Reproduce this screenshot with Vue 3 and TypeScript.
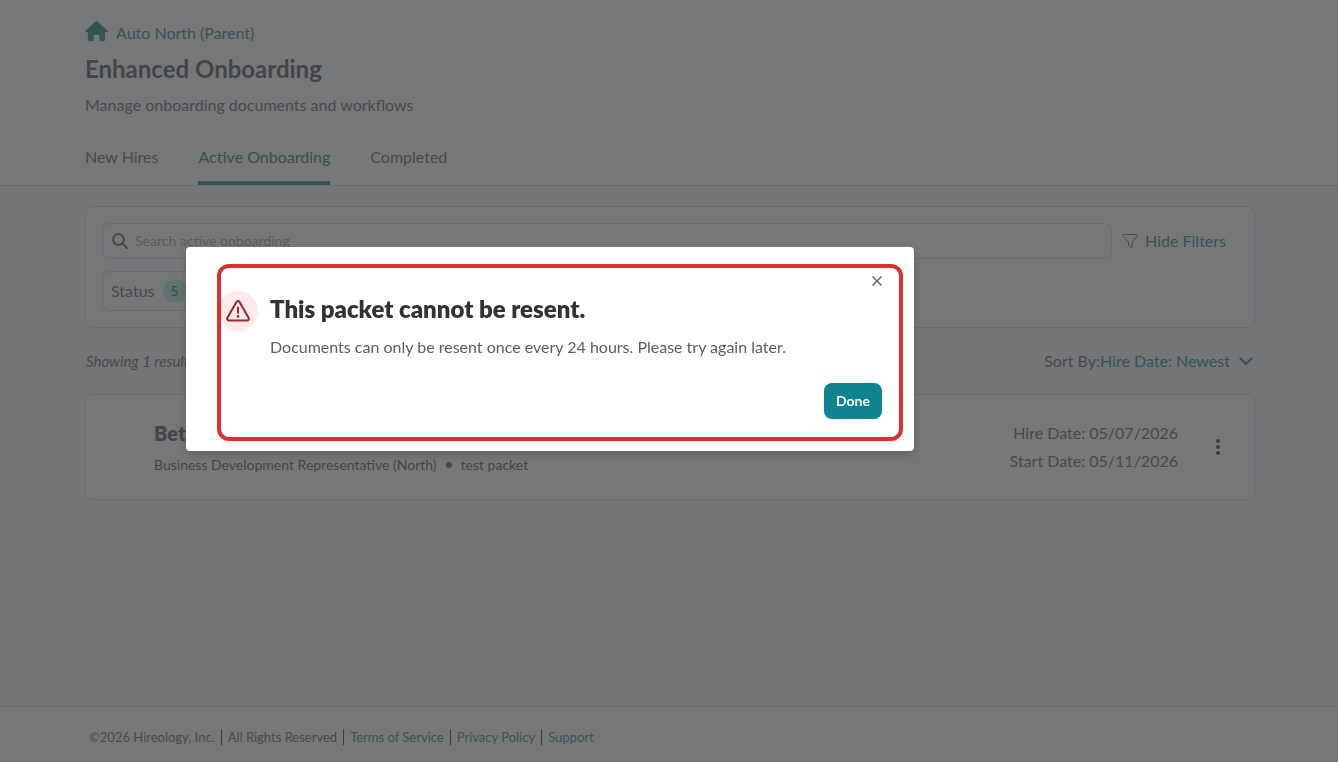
<script setup lang="ts">
import { ref } from 'vue'

const tabs = ['New Hires', 'Active Onboarding', 'Completed']
const activeTab = ref('Active Onboarding')
const search = ref('')
const sort = ref('Hire Date: Newest')
const modalOpen = ref(true)
const legalLinks = ['Terms of Service', 'Privacy Policy', 'Support']
</script>

<template>
  <div class="page">
    <header class="header">
      <a class="crumb" href="#">
        <svg class="home" viewBox="0 0 24 22" aria-hidden="true">
          <path d="M11 .6a1.500 1.500 0 0 1 2 0l10.300 9.300c.8.7.3 1.900-.7 1.900H21v7.700a1.800 1.800 0 0 1-1.800 1.800h-3.400a.8.8 0 0 1-.8-.8v-4.700a1.300 1.300 0 0 0-1.300-1.300h-3.400A1.300 1.300 0 0 0 9 15.800v4.700a.8.8 0 0 1-.8.8H4.800A1.800 1.800 0 0 1 3 19.500v-7.700H1.400c-1 0-1.500-1.200-.7-1.900z" />
        </svg>
        <span>Auto North (Parent)</span>
      </a>
      <h1>Enhanced Onboarding</h1>
      <p class="subtitle">Manage onboarding documents and workflows</p>
      <nav class="tabs">
        <button v-for="tab in tabs" :key="tab" type="button" class="tab" :class="{ active: tab === activeTab }" @click="activeTab = tab">{{ tab }}</button>
      </nav>
    </header>

    <main class="main">
      <section class="card filters">
        <div class="filter-row">
          <label class="search">
            <svg class="search-icon" viewBox="0 0 16 16" aria-hidden="true">
              <circle cx="6.500" cy="6.500" r="5.400" /><path d="M10.500 10.500 15 15" />
            </svg>
            <input v-model="search" type="text" placeholder="Search active onboarding" aria-label="Search active onboarding" />
          </label>
          <button type="button" class="hide-filters">
            <svg viewBox="0 0 16 16" aria-hidden="true">
              <path d="M1.200 1.500h13.600c.6 0 .9.700.5 1.200L10 9v5.100c0 .5-.5.700-.9.400l-2.600-2V9L.7 2.700c-.4-.5-.1-1.200.5-1.200z" />
            </svg>
            Hide Filters
          </button>
        </div>
        <button type="button" class="status">Status <span class="badge">5</span></button>
      </section>

      <div class="results">
        <span class="count">Showing 1 result</span>
        <label class="sort">
          <span>Sort By:</span>
          <select v-model="sort">
            <option>Hire Date: Newest</option>
          </select>
          <svg class="chevron" viewBox="0 0 14 8" aria-hidden="true"><path d="M.8.8 7 7 13.200.8" /></svg>
        </label>
      </div>

      <article class="card hire">
        <div class="person">
          <h2>Bet</h2>
          <p>Business Development Representative (North)<span class="dot"></span>test packet</p>
        </div>
        <div class="dates">
          <span>Hire Date: 05/07/2026</span>
          <span>Start Date: 05/11/2026</span>
        </div>
        <button type="button" class="more" aria-label="More actions">
          <svg viewBox="0 0 4 16" aria-hidden="true"><circle cx="2" cy="2" r="2" /><circle cx="2" cy="8" r="2" /><circle cx="2" cy="14" r="2" /></svg>
        </button>
      </article>
    </main>

    <footer class="footer">
      <span>©2026 Hireology, Inc.</span>
      <span>All Rights Reserved</span>
      <a v-for="link in legalLinks" :key="link" href="#">{{ link }}</a>
    </footer>

    <div v-if="modalOpen" class="backdrop">
      <div class="modal" role="dialog" aria-modal="true" aria-labelledby="modal-title">
        <div class="alert-icon">
          <svg viewBox="0 0 24 22" aria-hidden="true">
            <path d="M10.600 1.800a1.600 1.600 0 0 1 2.800 0l9.300 16.200a1.600 1.600 0 0 1-1.400 2.400H2.700A1.600 1.600 0 0 1 1.300 18z" />
            <path d="M12 7.500v5.200" /><circle cx="12" cy="16.400" r="1.300" />
          </svg>
        </div>
        <div class="modal-body">
          <h2 id="modal-title">This packet cannot be resent.</h2>
          <p>Documents can only be resent once every 24 hours. Please try again later.</p>
          <button type="button" class="done" @click="modalOpen = false">Done</button>
        </div>
        <button type="button" class="close" aria-label="Close" @click="modalOpen = false">
          <svg viewBox="0 0 12 12" aria-hidden="true"><path d="M1.500 1.500l9 9M10.500 1.500l-9 9" /></svg>
        </button>
        <div class="highlight"></div>
      </div>
    </div>
  </div>
</template>

<style>
body {
  margin: 0;
}
</style>

<style scoped>
.page {
  --teal: #0f8390;
  --ink: #313237;
  --soft-ink: #4c4e54;
  --grey: #5b5d64;
  --line: #d5d7da;
  min-height: 100vh;
  display: flex;
  flex-direction: column;
  background: #f6f7f8;
  color: var(--grey);
  font-family: Lato, "Liberation Sans", sans-serif;
  font-size: 16px;
  line-height: 24px;
}
* {
  box-sizing: border-box;
}
h1, h2, p {
  margin: 0;
}
button, input, select {
  font: inherit;
  color: inherit;
  background: none;
  border: 0;
  padding: 0;
  margin: 0;
}
a {
  color: var(--teal);
  text-decoration: none;
}
svg {
  display: block;
  flex: none;
}
.header {
  padding: 21px 83px 0 85px;
  background: #fff;
  border-bottom: 1px solid var(--line);
}
.crumb {
  display: flex;
  gap: 8px;
}
.home {
  width: 23px;
  height: 21px;
  fill: var(--teal);
}
h1 {
  margin-top: 8px;
  font-size: 24px;
  line-height: 32px;
  font-weight: 700;
  color: var(--soft-ink);
}
.subtitle {
  margin-top: 8px;
}
.tabs {
  display: flex;
  gap: 40px;
  margin-top: 28px;
}
.tab {
  padding-bottom: 12px;
  border-bottom: 4px solid transparent;
}
.tab.active {
  color: #12776f;
  border-color: var(--teal);
}
.main {
  flex: 1;
  padding: 20px 83px 20px 85px;
}
.card {
  border: 1px solid var(--line);
  border-radius: 8px;
  background: #fff;
}
.filters {
  padding: 16px;
}
.filter-row {
  display: flex;
  gap: 10px;
  padding-right: 12px;
}
.search {
  flex: 1;
  display: flex;
  align-items: center;
  gap: 7px;
  height: 36px;
  padding: 0 9px;
  border: 1px solid var(--line);
  border-radius: 8px;
}
.search input {
  flex: 1;
  font-size: 14px;
  outline: 0;
}
.search input::placeholder {
  color: #9b9da3;
  opacity: 1;
}
.search-icon {
  width: 16px;
  height: 16px;
  fill: none;
  stroke: var(--grey);
  stroke-width: 2;
  stroke-linecap: round;
}
.hide-filters {
  display: flex;
  align-items: center;
  gap: 7px;
  color: var(--teal);
}
.hide-filters svg {
  width: 16px;
  height: 16px;
  fill: none;
  stroke: var(--teal);
}
.status {
  display: flex;
  align-items: center;
  gap: 8px;
  height: 40px;
  margin-top: 12px;
  padding: 0 8px;
  border: 1px solid var(--line);
  border-radius: 8px;
}
.badge {
  width: 24px;
  border-radius: 12px;
  background: #b4f0e0;
  color: #08636c;
  font-size: 14px;
}
.results {
  display: flex;
  justify-content: space-between;
  padding: 21px 2px 21px 1px;
}
.count {
  font-size: 15px;
  font-style: italic;
}
.sort {
  display: flex;
  align-items: center;
}
.sort select {
  appearance: none;
  color: var(--teal);
}
.chevron {
  width: 14px;
  height: 8px;
  margin-left: 9px;
  fill: none;
  stroke: var(--teal);
  stroke-width: 2;
}
.hire {
  display: flex;
  align-items: center;
  height: 106px;
  padding: 0 34px 0 68px;
}
.person {
  flex: 1;
}
.person h2 {
  font-size: 20px;
  line-height: 32px;
  font-weight: 800;
  color: var(--soft-ink);
}
.person p {
  display: flex;
  align-items: center;
  margin-top: 4px;
  font-size: 14px;
  color: var(--soft-ink);
}
.dot {
  width: 6px;
  height: 6px;
  margin: 0 9px;
  border-radius: 3px;
  background: var(--soft-ink);
}
.dates {
  display: flex;
  flex-direction: column;
  gap: 4px;
  text-align: right;
}
.more {
  margin-left: 38px;
}
.more svg {
  width: 4px;
  height: 16px;
  fill: var(--ink);
}
.footer {
  display: flex;
  align-items: center;
  height: 56px;
  padding: 4px 83px 0;
  border-top: 1px solid var(--line);
  background: #fff;
  font-size: 13px;
  line-height: 16px;
}
.footer > * {
  padding: 0 6px;
}
.footer > * + * {
  border-left: 1px solid var(--ink);
}
.backdrop {
  position: fixed;
  inset: 0;
  padding: 247px 24px 24px 186px;
  background: rgba(65, 66, 69, 0.72);
}
.modal {
  position: relative;
  display: flex;
  gap: 12px;
  max-width: 728px;
  padding: 44px 32px 32px;
  border-radius: 4px;
  background: #fff;
  box-shadow: 0 4px 10px rgba(0, 0, 0, 0.2);
}
.alert-icon {
  display: grid;
  place-items: center;
  flex: none;
  width: 40px;
  height: 40px;
  border-radius: 50%;
  background: #feeaea;
}
.alert-icon svg {
  width: 24px;
  height: 22px;
  fill: none;
  stroke: #932b2b;
  stroke-width: 2;
  stroke-linecap: round;
}
.alert-icon circle {
  fill: #932b2b;
  stroke: none;
}
.modal-body {
  flex: 1;
  display: flex;
  flex-direction: column;
}
.modal-body h2 {
  font-size: 24px;
  line-height: 36px;
  font-weight: 800;
  color: var(--ink);
}
.modal-body p {
  margin-top: 8px;
}
.done {
  align-self: flex-end;
  height: 36px;
  margin-top: 24px;
  padding: 0 12px;
  border-radius: 8px;
  background: var(--teal);
  color: #fff;
  font-size: 14px;
  font-weight: 700;
}
.close {
  position: absolute;
  top: 28px;
  right: 31px;
}
.close svg {
  width: 12px;
  height: 12px;
  fill: none;
  stroke: #5d6470;
  stroke-width: 1.500;
}
.highlight {
  position: absolute;
  inset: 17px 11px 10px 31px;
  border: 4px solid #dc2f2f;
  border-radius: 12px;
  pointer-events: none;
}
</style>
